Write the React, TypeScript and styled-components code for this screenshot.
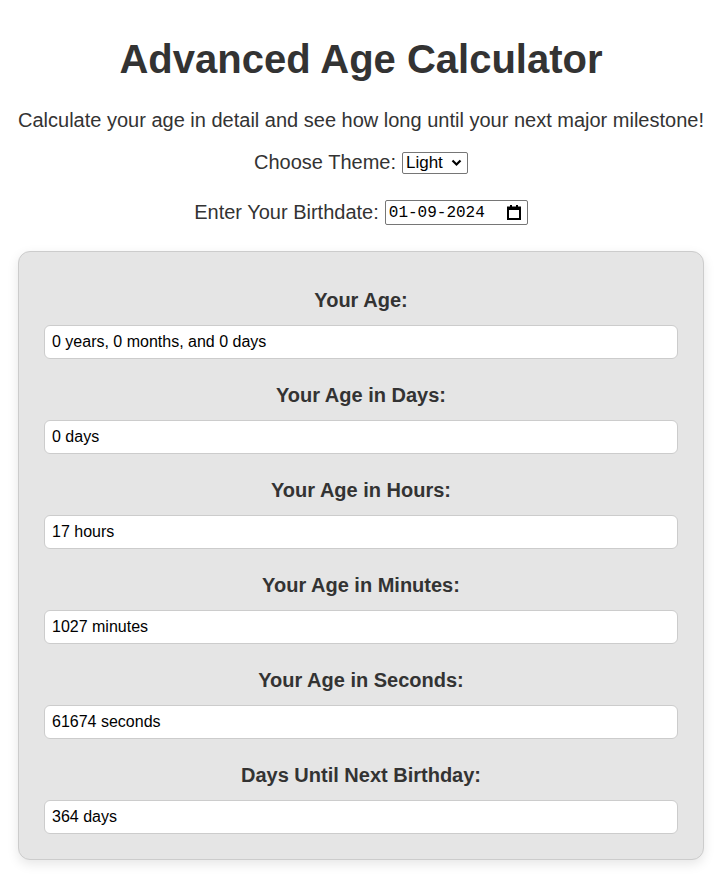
import React from "react";
import styled, { createGlobalStyle } from "styled-components";

const Global = createGlobalStyle`
  body {
    margin: 0;
    font-family: "Liberation Sans", Arial, sans-serif;
    background: #ffffff;
    color: #333333;
  }
`;

const Page = styled.div`
  padding: 0 23px 20px 18px;
  text-align: center;
`;

const Title = styled.h1`
  font-size: 40px;
  font-weight: bold;
  color: #333333;
  margin: 37px 0 0;
`;

const Subtitle = styled.p`
  font-size: 20px;
  margin: 27px 0 0;
  color: #333333;
`;

const Field = styled.div<{ $top: number }>`
  font-size: 20px;
  margin-top: ${(p) => p.$top}px;
  color: #333333;
  display: flex;
  justify-content: center;
  align-items: center;
  gap: 6px;
`;

const SelectWrap = styled.span`
  position: relative;
  display: inline-flex;
`;

const Select = styled.select`
  appearance: none;
  font-family: "Liberation Sans", Arial, sans-serif;
  font-size: 17px;
  color: #000;
  background: #fff;
  border: 1px solid #767676;
  border-radius: 2px;
  height: 22px;
  width: 66px;
  padding: 0 0 0 3px;
  line-height: 20px;
`;

const Chevron = styled.svg`
  position: absolute;
  right: 6px;
  top: 7px;
  pointer-events: none;
`;

const DateBox = styled.span`
  display: inline-flex;
  align-items: center;
  width: 143px;
  height: 25px;
  box-sizing: border-box;
  border: 1px solid #767676;
  border-radius: 2px;
  background: #fff;
  padding: 0 6px 0 3px;
`;

const DateText = styled.input`
  flex: 1;
  min-width: 0;
  border: none;
  outline: none;
  padding: 0;
  font-family: "Liberation Mono", monospace;
  font-size: 16px;
  color: #000;
  background: transparent;
`;

const Card = styled.div`
  margin-top: 26px;
  background: #e5e5e5;
  border: 1px solid #cccccc;
  border-radius: 12px;
  box-shadow: 0 4px 12px rgba(0, 0, 0, 0.1);
  padding: 23px 25px 25px;
`;

const Section = styled.div`
  & + & {
    margin-top: 25px;
  }
`;

const Label = styled.h3`
  font-size: 20px;
  font-weight: bold;
  color: #333333;
  margin: 14px 0 13px;
`;

const Output = styled.div`
  background: #ffffff;
  border: 1px solid #cccccc;
  border-radius: 6px;
  padding: 7px 7px;
  font-size: 16px;
  line-height: 18px;
  text-align: left;
  color: #000000;
`;

const rows = [
  ["Your Age:", "0 years, 0 months, and 0 days"],
  ["Your Age in Days:", "0 days"],
  ["Your Age in Hours:", "17 hours"],
  ["Your Age in Minutes:", "1027 minutes"],
  ["Your Age in Seconds:", "61674 seconds"],
  ["Days Until Next Birthday:", "364 days"],
];

export default function App() {
  return (
    <Page>
      <Global />
      <Title>Advanced Age Calculator</Title>
      <Subtitle>Calculate your age in detail and see how long until your next major milestone!</Subtitle>
      <Field $top={19}>
        <span>Choose Theme:</span>
        <SelectWrap>
          <Select defaultValue="light">
            <option value="light">Light</option>
            <option value="dark">Dark</option>
          </Select>
          <Chevron width="11" height="8" viewBox="0 0 11 8">
            <path d="M1.5 1.5 L5.5 5.5 L9.5 1.5" fill="none" stroke="#000" strokeWidth="2.2" />
          </Chevron>
        </SelectWrap>
      </Field>
      <Field $top={26}>
        <span>Enter Your Birthdate:</span>
        <DateBox>
          <DateText type="text" defaultValue="01-09-2024" aria-label="Birthdate" />
          <svg width="14" height="15" viewBox="0 0 14 15">
            <rect x="1" y="2.5" width="12" height="11.5" fill="none" stroke="#000" strokeWidth="2" />
            <rect x="1" y="2" width="12" height="3" fill="#000" />
            <rect x="3" y="0" width="2" height="3" fill="#000" />
            <rect x="9" y="0" width="2" height="3" fill="#000" />
          </svg>
        </DateBox>
      </Field>
      <Card>
        {rows.map(([l, v]) => (
          <Section key={l}>
            <Label>{l}</Label>
            <Output>{v}</Output>
          </Section>
        ))}
      </Card>
    </Page>
  );
}
